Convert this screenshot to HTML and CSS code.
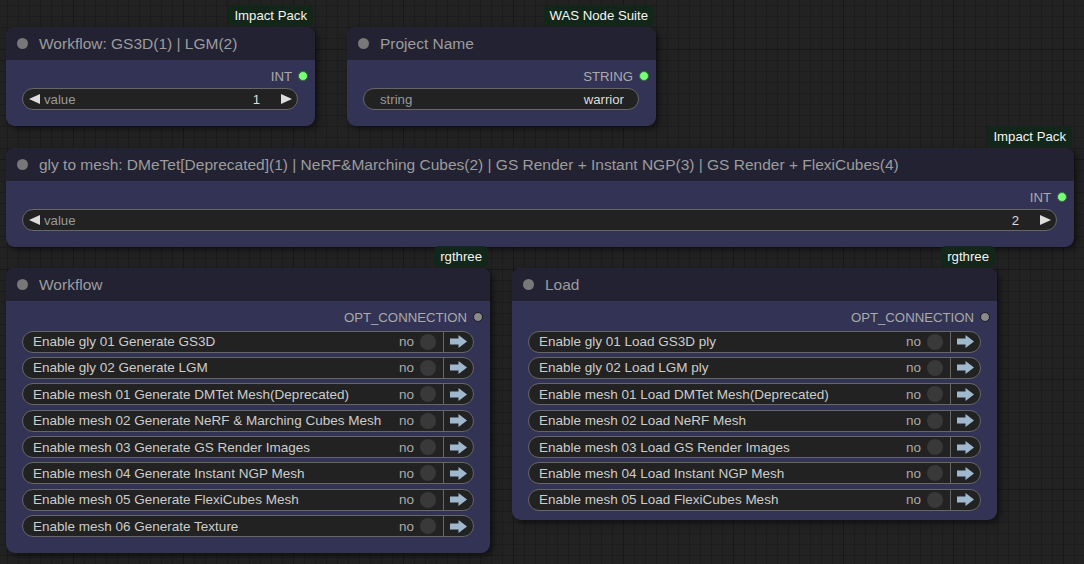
FILE: index.html
```html
<!DOCTYPE html>
<html>
<head>
<meta charset="utf-8">
<link rel="stylesheet" href="styles.css">
</head>
<body>
<div class="canvas">

  <div class="node n1">
    <div class="badge">Impact Pack</div>
    <div class="title"><span class="tdot"></span><span>Workflow: GS3D(1) | LGM(2)</span></div>
    <div class="outrow"><span>INT</span><span class="sdot green"></span></div>
    <div class="widget num">
      <span class="arrl"></span><span class="wlabel">value</span><span class="wval">1</span><span class="arrr"></span>
    </div>
  </div>

  <div class="node n2">
    <div class="badge">WAS Node Suite</div>
    <div class="title"><span class="tdot"></span><span>Project Name</span></div>
    <div class="outrow"><span>STRING</span><span class="sdot green"></span></div>
    <div class="widget str">
      <span class="wlabel">string</span><span class="wval">warrior</span>
    </div>
  </div>

  <div class="node n3">
    <div class="badge">Impact Pack</div>
    <div class="title"><span class="tdot"></span><span>gly to mesh: DMeTet[Deprecated](1) | NeRF&amp;Marching Cubes(2) | GS Render + Instant NGP(3) | GS Render + FlexiCubes(4)</span></div>
    <div class="outrow"><span>INT</span><span class="sdot green"></span></div>
    <div class="widget num">
      <span class="arrl"></span><span class="wlabel">value</span><span class="wval">2</span><span class="arrr"></span>
    </div>
  </div>

  <div class="node n4">
    <div class="badge">rgthree</div>
    <div class="title"><span class="tdot"></span><span>Workflow</span></div>
    <div class="outrow"><span>OPT_CONNECTION</span><span class="sdot grey"></span></div>
    <div class="rows">
      <div class="toggle"><span class="tlabel">Enable gly 01 Generate GS3D</span><span class="no">no</span><span class="knob"></span><span class="btn"><svg width="17" height="13" viewBox="0 0 17 13"><path d="M0 3.5h8.5V0L17 6.5 8.5 13V9.5H0z"/></svg></span></div>
      <div class="toggle"><span class="tlabel">Enable gly 02 Generate LGM</span><span class="no">no</span><span class="knob"></span><span class="btn"><svg width="17" height="13" viewBox="0 0 17 13"><path d="M0 3.5h8.5V0L17 6.5 8.5 13V9.5H0z"/></svg></span></div>
      <div class="toggle"><span class="tlabel">Enable mesh 01 Generate DMTet Mesh(Deprecated)</span><span class="no">no</span><span class="knob"></span><span class="btn"><svg width="17" height="13" viewBox="0 0 17 13"><path d="M0 3.5h8.5V0L17 6.5 8.5 13V9.5H0z"/></svg></span></div>
      <div class="toggle"><span class="tlabel">Enable mesh 02 Generate NeRF &amp; Marching Cubes Mesh</span><span class="no">no</span><span class="knob"></span><span class="btn"><svg width="17" height="13" viewBox="0 0 17 13"><path d="M0 3.5h8.5V0L17 6.5 8.5 13V9.5H0z"/></svg></span></div>
      <div class="toggle"><span class="tlabel">Enable mesh 03 Generate GS Render Images</span><span class="no">no</span><span class="knob"></span><span class="btn"><svg width="17" height="13" viewBox="0 0 17 13"><path d="M0 3.5h8.5V0L17 6.5 8.5 13V9.5H0z"/></svg></span></div>
      <div class="toggle"><span class="tlabel">Enable mesh 04 Generate Instant NGP Mesh</span><span class="no">no</span><span class="knob"></span><span class="btn"><svg width="17" height="13" viewBox="0 0 17 13"><path d="M0 3.5h8.5V0L17 6.5 8.5 13V9.5H0z"/></svg></span></div>
      <div class="toggle"><span class="tlabel">Enable mesh 05 Generate FlexiCubes Mesh</span><span class="no">no</span><span class="knob"></span><span class="btn"><svg width="17" height="13" viewBox="0 0 17 13"><path d="M0 3.5h8.5V0L17 6.5 8.5 13V9.5H0z"/></svg></span></div>
      <div class="toggle"><span class="tlabel">Enable mesh 06 Generate Texture</span><span class="no">no</span><span class="knob"></span><span class="btn"><svg width="17" height="13" viewBox="0 0 17 13"><path d="M0 3.5h8.5V0L17 6.5 8.5 13V9.5H0z"/></svg></span></div>
    </div>
  </div>

  <div class="node n5">
    <div class="badge">rgthree</div>
    <div class="title"><span class="tdot"></span><span>Load</span></div>
    <div class="outrow"><span>OPT_CONNECTION</span><span class="sdot grey"></span></div>
    <div class="rows">
      <div class="toggle"><span class="tlabel">Enable gly 01 Load GS3D ply</span><span class="no">no</span><span class="knob"></span><span class="btn"><svg width="17" height="13" viewBox="0 0 17 13"><path d="M0 3.5h8.5V0L17 6.5 8.5 13V9.5H0z"/></svg></span></div>
      <div class="toggle"><span class="tlabel">Enable gly 02 Load LGM ply</span><span class="no">no</span><span class="knob"></span><span class="btn"><svg width="17" height="13" viewBox="0 0 17 13"><path d="M0 3.5h8.5V0L17 6.5 8.5 13V9.5H0z"/></svg></span></div>
      <div class="toggle"><span class="tlabel">Enable mesh 01 Load DMTet Mesh(Deprecated)</span><span class="no">no</span><span class="knob"></span><span class="btn"><svg width="17" height="13" viewBox="0 0 17 13"><path d="M0 3.5h8.5V0L17 6.5 8.5 13V9.5H0z"/></svg></span></div>
      <div class="toggle"><span class="tlabel">Enable mesh 02 Load NeRF Mesh</span><span class="no">no</span><span class="knob"></span><span class="btn"><svg width="17" height="13" viewBox="0 0 17 13"><path d="M0 3.5h8.5V0L17 6.5 8.5 13V9.5H0z"/></svg></span></div>
      <div class="toggle"><span class="tlabel">Enable mesh 03 Load GS Render Images</span><span class="no">no</span><span class="knob"></span><span class="btn"><svg width="17" height="13" viewBox="0 0 17 13"><path d="M0 3.5h8.5V0L17 6.5 8.5 13V9.5H0z"/></svg></span></div>
      <div class="toggle"><span class="tlabel">Enable mesh 04 Load Instant NGP Mesh</span><span class="no">no</span><span class="knob"></span><span class="btn"><svg width="17" height="13" viewBox="0 0 17 13"><path d="M0 3.5h8.5V0L17 6.5 8.5 13V9.5H0z"/></svg></span></div>
      <div class="toggle"><span class="tlabel">Enable mesh 05 Load FlexiCubes Mesh</span><span class="no">no</span><span class="knob"></span><span class="btn"><svg width="17" height="13" viewBox="0 0 17 13"><path d="M0 3.5h8.5V0L17 6.5 8.5 13V9.5H0z"/></svg></span></div>
    </div>
  </div>

</div>
</body>
</html>
```
FILE: styles.css
```css
html, body {
  margin: 0;
  padding: 0;
  width: 1084px;
  height: 564px;
  overflow: hidden;
}

body {
  font-family: "Liberation Sans", Arial, sans-serif;
  background-color: #222222;
  background-image:
    linear-gradient(to right, #181818 1px, transparent 1px),
    linear-gradient(to bottom, #181818 1px, transparent 1px),
    linear-gradient(to right, #1c1c1c 1px, transparent 1px),
    linear-gradient(to bottom, #1c1c1c 1px, transparent 1px);
  background-size: 110px 110px, 110px 110px, 11px 11px, 11px 11px;
  background-position: 73px 49px, 73px 49px, 7px 5px, 7px 5px;
}

.canvas {
  position: relative;
  width: 1084px;
  height: 564px;
}

.node {
  position: absolute;
  display: flex;
  flex-direction: column;
  background: #335;
  border-radius: 9px;
  box-shadow: 3px 3px 6px rgba(0, 0, 0, 0.5);
}

.n1 { left: 6px; top: 27px; width: 309px; height: 99px; }
.n2 { left: 347px; top: 27px; width: 309px; height: 99px; }
.n3 { left: 6px; top: 148px; width: 1068px; height: 99px; }
.n4 { left: 6px; top: 268px; width: 484px; height: 285px; }
.n5 { left: 512px; top: 268px; width: 485px; height: 252px; }

.badge {
  position: absolute;
  right: 2px;
  bottom: calc(100% + 1px);
  height: 21px;
  padding: 0 6px;
  display: flex;
  align-items: center;
  background: #12261a;
  color: #f4f4f4;
  font-size: 13.2px;
  border-radius: 5px;
  white-space: nowrap;
}

.title {
  flex: none;
  height: 33px;
  display: flex;
  align-items: center;
  padding-left: 11px;
  background: #223;
  border-radius: 9px 9px 0 0;
  color: #9c9c9c;
  font-size: 15.5px;
  white-space: nowrap;
}

.tdot {
  flex: none;
  width: 11px;
  height: 11px;
  border-radius: 50%;
  background: #787878;
  margin-right: 11px;
}

.outrow {
  flex: none;
  height: 20px;
  margin-top: 6px;
  padding-right: 7px;
  display: flex;
  justify-content: flex-end;
  align-items: center;
  gap: 6px;
  color: #aaa;
  font-size: 13.2px;
}

.sdot {
  width: 10px;
  height: 10px;
  border-radius: 50%;
  box-sizing: border-box;
}

.sdot.green { background: #7f7; border: 1px solid #3a6a3a; }
.sdot.grey { background: #8a8a8a; border: 1.5px solid #1a1a22; }

.widget {
  flex: none;
  height: 22px;
  box-sizing: border-box;
  margin: 2px 17px 0 16px;
  border: 1px solid #666;
  border-radius: 11px;
  background: #222;
  display: flex;
  align-items: center;
  font-size: 13.2px;
  white-space: nowrap;
}

.widget.num { padding: 0 5px 0 6px; }
.widget.str { padding: 0 14px 0 16px; }

.wlabel {
  flex: 1;
  color: #999;
}

.num .wlabel { margin-left: 4px; }

.wval { color: #ddd; }

.num .wval { margin-right: 21px; }

.arrl {
  width: 0;
  height: 0;
  border-top: 5.5px solid transparent;
  border-bottom: 5.5px solid transparent;
  border-right: 11px solid #ddd;
}

.arrr {
  width: 0;
  height: 0;
  border-top: 5.5px solid transparent;
  border-bottom: 5.5px solid transparent;
  border-left: 11px solid #ddd;
}

.rows {
  display: flex;
  flex-direction: column;
  gap: 4.4px;
  margin: 3.5px 16px 0 16px;
}

.toggle {
  height: 22px;
  box-sizing: border-box;
  border: 1px solid #666;
  border-radius: 11px;
  background: #222;
  display: flex;
  align-items: center;
  font-size: 13.5px;
  white-space: nowrap;
  overflow: hidden;
}

.tlabel {
  flex: 1;
  padding-left: 10px;
  color: #ccc;
}

.no {
  color: #aaa;
  margin-right: 6px;
}

.knob {
  flex: none;
  width: 16px;
  height: 16px;
  border-radius: 50%;
  background: #393939;
  margin-right: 7px;
}

.btn {
  flex: none;
  width: 30px;
  height: 100%;
  box-sizing: border-box;
  border-left: 1px solid #666;
  display: flex;
  align-items: center;
  justify-content: center;
}

.btn svg { fill: #9fb8cd; display: block; }
```
